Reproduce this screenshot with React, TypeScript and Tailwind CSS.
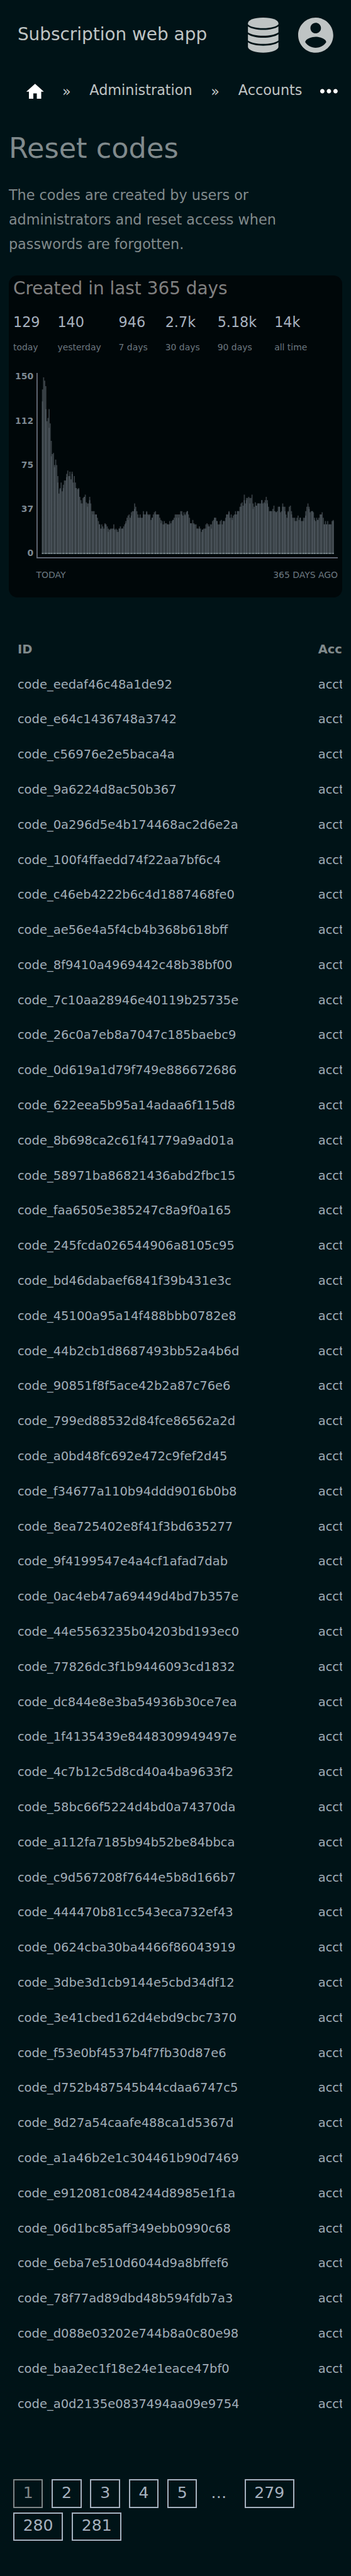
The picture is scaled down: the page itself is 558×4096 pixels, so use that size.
import { MdHome, MdMoreHoriz } from "react-icons/md";

const codes = [
  "eedaf46c48a1de92", "e64c1436748a3742", "c56976e2e5baca4a", "9a6224d8ac50b367",
  "0a296d5e4b174468ac2d6e2a", "100f4ffaedd74f22aa7bf6c4", "c46eb4222b6c4d1887468fe0",
  "ae56e4a5f4cb4b368b618bff", "8f9410a4969442c48b38bf00", "7c10aa28946e40119b25735e",
  "26c0a7eb8a7047c185baebc9", "0d619a1d79f749e886672686", "622eea5b95a14adaa6f115d8",
  "8b698ca2c61f41779a9ad01a", "58971ba86821436abd2fbc15", "faa6505e385247c8a9f0a165",
  "245fcda026544906a8105c95", "bd46dabaef6841f39b431e3c", "45100a95a14f488bbb0782e8",
  "44b2cb1d8687493bb52a4b6d", "90851f8f5ace42b2a87c76e6", "799ed88532d84fce86562a2d",
  "a0bd48fc692e472c9fef2d45", "f34677a110b94ddd9016b0b8", "8ea725402e8f41f3bd635277",
  "9f4199547e4a4cf1afad7dab", "0ac4eb47a69449d4bd7b357e", "44e5563235b04203bd193ec0",
  "77826dc3f1b9446093cd1832", "dc844e8e3ba54936b30ce7ea", "1f4135439e8448309949497e",
  "4c7b12c5d8cd40a4ba9633f2", "58bc66f5224d4bd0a74370da", "a112fa7185b94b52be84bbca",
  "c9d567208f7644e5b8d166b7", "444470b81cc543eca732ef43", "0624cba30ba4466f86043919",
  "3dbe3d1cb9144e5cbd34df12", "3e41cbed162d4ebd9cbc7370", "f53e0bf4537b4f7fb30d87e6",
  "d752b487545b44cdaa6747c5", "8d27a54caafe488ca1d5367d", "a1a46b2e1c304461b90d7469",
  "e912081c084244d8985e1f1a", "06d1bc85aff349ebb0990c68", "6eba7e510d6044d9a8bffef6",
  "78f77ad89dbd48b594fdb7a3", "d088e03202e744b8a0c80e98", "baa2ec1f18e24e1eace47bf0",
  "a0d2135e0837494aa09e9754",
];

const stats = [
  ["129", "today"], ["140", "yesterday"], ["946", "7 days"],
  ["2.7k", "30 days"], ["5.18k", "90 days"], ["14k", "all time"],
];

// Top of each chart column, in thirds of a chart unit.
const tops = [
  120, 54, 72, 102, 294, 276, 228, 306, 402, 474, 468, 534, 504, 534, 594, 690, 660, 630, 678, 642,
  618, 618, 582, 564, 594, 570, 612, 570, 630, 594, 630, 660, 666, 660, 708, 726, 744, 714, 708, 696,
  738, 744, 744, 708, 744, 786, 786, 786, 804, 804, 822, 840, 858, 882, 858, 870, 882, 852, 858, 870,
  882, 888, 882, 882, 882, 858, 888, 882, 888, 900, 882, 870, 882, 882, 870, 858, 840, 822, 810, 804,
  822, 792, 786, 786, 744, 762, 786, 804, 822, 804, 822, 822, 786, 804, 804, 786, 804, 804, 804, 834,
  822, 804, 792, 786, 804, 804, 804, 822, 834, 840, 858, 840, 852, 852, 858, 858, 840, 852, 840, 834,
  822, 804, 804, 804, 804, 804, 786, 786, 810, 792, 804, 792,
  786, 804, 822, 852, 852, 834, 852, 858, 858, 882, 882, 870, 882, 900, 888, 882, 882, 858, 852, 858,
  870, 858, 858, 840, 834, 822, 822, 840, 858, 858, 840, 834, 858, 840, 840, 822, 804, 804, 786, 822,
  804, 822, 810, 804, 786, 804, 786, 786, 762, 744, 738, 756, 696, 744, 714, 714, 708, 714, 714, 696,
  744, 762, 738, 756, 744, 744, 744, 744, 726, 744, 738, 726, 708, 726, 762, 786, 786, 786, 774, 756,
  786, 792, 786, 762, 762, 792, 786, 744, 762, 762, 804, 822, 786, 762, 756, 786, 822, 822, 822, 840,
  822, 810, 834, 822, 840, 840, 822, 822, 786, 762, 744, 762, 792, 786, 786, 792, 822, 840, 822, 834,
  822, 804, 804, 792, 822, 858, 840, 858, 840, 858, 858, 858, 840, 834,
];

// Columns shared by two days: [column, top of the shorter day].
const shared: [number, number][] = [
  [0, 186], [3, 228], [6, 330], [8, 486], [11, 546], [14, 630], [16, 666], [19, 660], [22, 600],
  [25, 594], [27, 582], [30, 660], [33, 666], [35, 744], [38, 708], [41, 762], [43, 726], [46, 804],
  [49, 804], [52, 858], [54, 882], [57, 858], [60, 900], [62, 888], [65, 882], [68, 900], [70, 882],
  [73, 882], [76, 852], [78, 834], [81, 810], [84, 774], [87, 822], [89, 822], [92, 804], [95, 792],
  [97, 810], [100, 822], [103, 804], [105, 804], [108, 852], [111, 858], [114, 858], [116, 858],
  [119, 834], [122, 822], [124, 822], [127, 804], [130, 810], [132, 786], [135, 852], [138, 858],
  [141, 882], [143, 882], [146, 888], [149, 882], [151, 870], [154, 882], [157, 822], [159, 840],
  [162, 858], [165, 840], [168, 804], [170, 792], [173, 834], [176, 804], [178, 786], [181, 762],
  [184, 726], [186, 726], [189, 744], [192, 774], [195, 756], [197, 744], [200, 726], [203, 744],
  [205, 744], [208, 786], [211, 786], [213, 792], [216, 762], [219, 762], [221, 786], [224, 792],
  [227, 804], [230, 840], [232, 840], [235, 822], [238, 840], [240, 810], [243, 774], [246, 786],
  [248, 834], [251, 834], [254, 804], [257, 858], [259, 858], [262, 858], [265, 840],
];

const y = (v: number) => v / 3 - 10;
const silhouette =
  "M10 330" + tops.map((v, i) => `V${y(v)}H${12 + i * 2}`).join("") + "V330Z";
const overlaps = shared.map(([c, v]) => `M${10 + c * 2} 330V${y(v)}h2V330Z`).join("");
const feet = shared.map(([c]) => `M${10 + c * 2} 330v-2h2v2Z`).join("");

function Chart() {
  return (
    <svg className="block h-[294.7px] w-[479.5px]" viewBox="0 0 550 338">
      <path d={silhouette} fill="#373f44" />
      <path d={overlaps} fill="#4e575e" />
      <rect x="10" y="328" width="532" height="2" fill="#5b676b" />
      <path d={feet} fill="#87949a" />
      <path d="M0 0h2v336h548v2H0Z" fill="#6b7280" />
    </svg>
  );
}

function DatabaseIcon() {
  return (
    <svg className="h-[55.8px] w-[48.8px]" viewBox="0 0 56 64" fill="currentColor">
      <path d="M0.200 10.500C0.200 4.500 11 0 28 0S55.800 4.500 55.800 10.500V12C52 16.500 42 19.200 28 19.200S4 16.500 0.200 12Z" />
      <path d="M0.200 16C6 20.200 16 22.300 28 22.300S50 20.200 55.800 16V27C50 31 40 33.100 28 33.100S6 31 0.200 27Z" />
      <path d="M0.200 30.500C6 34.700 16 36.800 28 36.800S50 34.700 55.800 30.500V41.800C50 45.800 40 48 28 48S6 45.800 0.200 41.800Z" />
      <path d="M0.200 45C6 49.200 16 51.200 28 51.200S50 49.200 55.800 45V54C54 60 43 64 28 64S2 60 0.200 54Z" />
    </svg>
  );
}

function AccountIcon() {
  return (
    <svg className="size-[55.8px]" viewBox="2 2 20 20" fill="currentColor">
      <path d="M12 2C6.480 2 2 6.480 2 12s4.480 10 10 10 10-4.480 10-10S17.520 2 12 2zm0 3c1.660 0 3 1.340 3 3s-1.340 3-3 3-3-1.340-3-3 1.340-3 3-3zm0 14.200c-2.500 0-4.710-1.280-6-3.220.030-1.990 4-3.080 6-3.080 1.990 0 5.970 1.090 6 3.080-1.290 1.940-3.500 3.220-6 3.220z" />
    </svg>
  );
}

function Page({ label, current }: { label: string; current?: boolean }) {
  return (
    <a
      className={
        current
          ? "flex h-[45.3px] items-center border-2 border-[#7f8688] px-[13.7px] pb-[3px] text-[#7f8688]"
          : "flex h-[45.3px] items-center border-2 border-[#a6b1bf] px-[13.7px] pb-[3px] text-[#a6b1bf]"
      }
    >
      {label}
    </a>
  );
}

export default function App() {
  return (
    <div className="h-[4096px] w-[558px] overflow-hidden bg-[#001317] font-['DejaVu_Sans',sans-serif] text-[#808a8c]">
      <header className="flex h-[111.6px] items-center justify-between px-[27.9px] text-[#bfc4c4]">
        <span className="pb-[2px] text-[27.9px] leading-[36px]">Subscription web app</span>
        <div className="flex gap-[31.4px]">
          <DatabaseIcon />
          <AccountIcon />
        </div>
      </header>

      <nav className="flex h-[66px] items-center pr-[14px] pl-[39.1px] text-[22.32px] leading-[32px] text-[#bfc4c4]">
        <MdHome className="mt-[2.5px] size-[33.5px] text-white" />
        <span className="ml-[26.3px] w-[43.4px]">»</span>
        <span className="w-[193px] pb-[4px]">Administration</span>
        <span className="w-[43.5px]">»</span>
        <span className="pb-[4px]">Accounts</span>
        <MdMoreHoriz className="ml-auto size-[41.85px] text-white" />
      </nav>

      <main className="px-[13.95px]">
        <h1 className="pt-[28px] text-[44.64px] leading-[60px]">Reset codes</h1>
        <p className="mt-[25px] text-[22.32px] leading-[39.06px]">
          The codes are created by users or administrators and reset access when passwords are
          forgotten.
        </p>

        <section className="mt-[30px] h-[512.7px] rounded-[14px] bg-[#000709] px-[7px]">
          <h2 className="pt-[2px] text-[27.9px] leading-[38px] text-[#808080]">
            Created in last 365 days
          </h2>
          <div className="mt-[18px] flex gap-[27.9px]">
            {stats.map(([n, l]) => (
              <div key={l}>
                <div className="text-[22.32px] leading-[32px] text-[#a6b1bf]">{n}</div>
                <div className="mt-[12px] text-[13.95px] leading-[24px] text-[#6b7780]">{l}</div>
              </div>
            ))}
          </div>
          <div className="mt-[24.7px] flex">
            <div className="flex h-[300.8px] w-[32.2px] flex-col justify-between text-right text-[13.95px] leading-[20px] font-bold text-[#7e8a93]">
              <span>150</span>
              <span>112</span>
              <span>75</span>
              <span>37</span>
              <span>0</span>
            </div>
            <div className="ml-[4.4px] pt-[4.4px]">
              <Chart />
              <div className="mt-[14.5px] flex justify-between text-[13.95px] leading-[24px] text-[#6b7780]">
                <span>TODAY</span>
                <span>365 DAYS AGO</span>
              </div>
            </div>
          </div>
        </section>

        <div className="mt-[54px] overflow-hidden pl-[13.95px] text-[19.53px] text-[#a0adb8]">
          <div className="flex h-[55.8px] items-center font-bold text-[#808a8c]">
            <span className="w-[477.8px] shrink-0">ID</span>
            <span className="whitespace-nowrap">Account</span>
          </div>
          {codes.map((c) => (
            <div key={c} className="flex h-[55.8px] items-center">
              <span className="w-[477.8px] shrink-0">code_{c}</span>
              <span>acct_{c}</span>
            </div>
          ))}
        </div>

        <div className="mt-[92.2px] flex flex-wrap gap-x-[13.9px] gap-y-[7px] px-[7px] text-[25.11px]">
          <Page label="1" current />
          <Page label="2" />
          <Page label="3" />
          <Page label="4" />
          <Page label="5" />
          <span className="flex h-[45.3px] w-[47.5px] items-center pb-[3px] pl-[8px] text-[#a6b1bf]">…</span>
          <Page label="279" />
          <Page label="280" />
          <Page label="281" />
        </div>
      </main>
    </div>
  );
}
